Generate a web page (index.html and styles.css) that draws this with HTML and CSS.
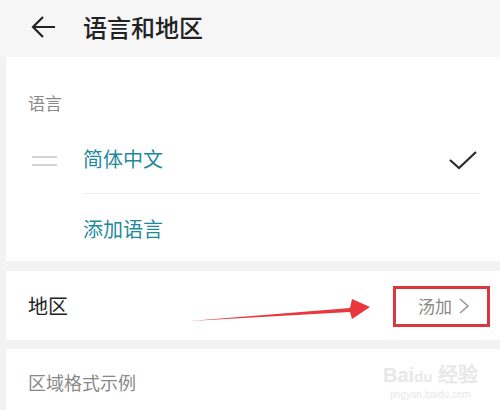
FILE: index.html
```html
<!DOCTYPE html>
<html lang="zh-CN">

<head>
    <meta charset="UTF-8" />
    <meta name="viewport" content="width=device-width, initial-scale=1.0" />
    <title>语言和地区</title>
    <link rel="stylesheet" href="styles.css">
</head>

<body>
    <div class="header">
        <svg class="back" width="26" height="24" viewBox="0 0 26 24">
            <path d="M24 12H3M12 2L2 12l10 10" fill="none" stroke="#222" stroke-width="2.2" />
        </svg>
        <h1>语言和地区</h1>
    </div>

    <div class="card">
        <div class="section-label">语言</div>
        <div class="lang-row">
            <div class="handle"><span></span><span></span></div>
            <div class="lang-main">
                <span class="lang-name">简体中文</span>
                <svg width="30" height="22" viewBox="0 0 30 22">
                    <path d="M2 10l9 8L28 2" fill="none" stroke="#2a2a2a" stroke-width="2.2" />
                </svg>
            </div>
        </div>
        <div class="add-row">添加语言</div>
    </div>

    <div class="card region">
        <span class="region-title">地区</span>
        <span class="region-value">汤加
            <svg width="12" height="18" viewBox="0 0 12 18">
                <path d="M2 2l8 7-8 7" fill="none" stroke="#999" stroke-width="1.6" />
            </svg>
        </span>
        <div class="mark-box"></div>
        <svg class="mark-arrow" width="190" height="30" viewBox="0 0 190 30">
            <polygon points="0,26 160,13 162,4 180,12 162,24 160,17" fill="#e8383d" />
        </svg>
    </div>

    <div class="card format">
        <div class="section-label">区域格式示例</div>
    </div>

    <div class="watermark">
        <div class="wm-logo">Bai<span>du</span> 经验</div>
        <div class="wm-url">jingyan.baidu.com</div>
    </div>
</body>

</html>
```

FILE: styles.css
```css
body {
    margin: 0;
    width: 500px;
    height: 410px;
    overflow: hidden;
    background-color: #f3f3f3;
    font-family: "Noto Sans CJK SC", "Noto Sans", sans-serif;
    position: relative;
}

.header {
    height: 57px;
    background-color: #f6f6f6;
    display: flex;
    align-items: center;
    padding-left: 31px;
    box-sizing: border-box;
}

.back {
    margin-top: -3px;
}

.header h1 {
    margin: -4px 0 0 26px;
    font-size: 24px;
    font-weight: 500;
    color: #222;
}

.card {
    background-color: #fff;
    margin-left: 6px;
}

.section-label {
    height: 71px;
    padding: 32px 0 0 22px;
    box-sizing: border-box;
    font-size: 17px;
    line-height: 28px;
    color: #888;
}

.lang-row {
    display: flex;
    height: 66px;
}

.handle {
    width: 77px;
    display: flex;
    flex-direction: column;
    justify-content: center;
    gap: 6px;
    padding-left: 26px;
    box-sizing: border-box;
}

.handle span {
    display: block;
    width: 25px;
    height: 2px;
    background-color: #d4d4d4;
}

.lang-main {
    flex: 1;
    margin-right: 20px;
    display: flex;
    align-items: center;
    justify-content: space-between;
    border-bottom: 1px solid #eeeeee;
    padding-right: 2px;
}

.lang-name,
.add-row {
    font-size: 20px;
    color: #1f8a9c;
}

.lang-name {
    margin-top: -4px;
}

.add-row {
    height: 67px;
    line-height: 70px;
    padding-left: 77px;
}

.region {
    margin-top: 10px;
    height: 69px;
    display: flex;
    align-items: center;
    justify-content: space-between;
    padding: 0 30px 0 22px;
    box-sizing: border-box;
    position: relative;
}

.region-title {
    font-size: 20px;
    color: #222;
}

.region-value {
    font-size: 17px;
    color: #888;
    display: flex;
    align-items: center;
    gap: 6px;
}

.mark-box {
    position: absolute;
    left: 387px;
    top: 15px;
    width: 97px;
    height: 41px;
    border: 3px solid #d9383e;
    box-sizing: border-box;
}

.mark-arrow {
    position: absolute;
    left: 184px;
    top: 24px;
}

.format {
    margin-top: 9px;
    height: 70px;
}

.format .section-label {
    padding-top: 19px;
    font-size: 18px;
}

.watermark {
    position: absolute;
    left: 383px;
    top: 364px;
    color: #e8e8e8;
    text-align: center;
    font-family: "Liberation Sans", sans-serif;
}

.wm-logo {
    font-size: 20px;
    font-weight: bold;
    line-height: 22px;
}

.wm-logo span {
    font-size: 15px;
}

.wm-url {
    font-size: 10px;
    line-height: 14px;
}
```
